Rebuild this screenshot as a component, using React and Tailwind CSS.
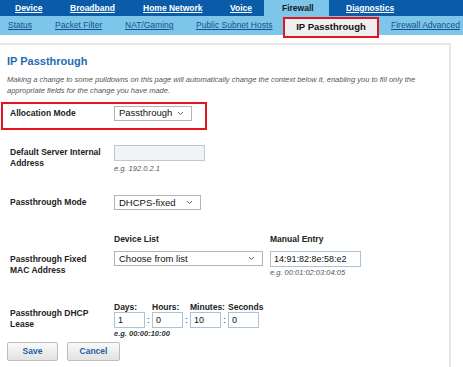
import React from 'react'

const font = { fontFamily: '"Liberation Sans", Arial, sans-serif' }

const Chevron = () => (
  <svg width="7" height="5" viewBox="0 0 7 5" className="shrink-0">
    <path d="M1 1 L3.5 3.5 L6 1" fill="none" stroke="#666" strokeWidth="1" />
  </svg>
)

const FakeSelect = ({ value, width }) => (
  <div
    className={`${width} h-[15px] flex items-center justify-between border border-[#b4b4b4] bg-white pl-[4px] pr-[7px] text-[9.5px] text-[#111]`}
  >
    <span className="leading-none">{value}</span>
    <Chevron />
  </div>
)

const Label = ({ children, className = '' }) => (
  <div className={`w-[104px] shrink-0 text-[8.5px] leading-[11px] font-bold text-[#222] ${className}`}>{children}</div>
)

const Hint = ({ children, className = '' }) => (
  <div className={`text-[7.5px] leading-[9px] italic text-[#555] ${className}`}>{children}</div>
)

const TimeBox = ({ value }) => (
  <div className="w-[31px] h-[16px] border border-[#a9c3d8] bg-white pl-[3px] text-[9px] leading-[14px] text-[#111]">
    {value}
  </div>
)

const Colon = () => <div className="w-[7px] text-center text-[9px] leading-[16px] text-[#222]">:</div>

export default function App() {
  const topNav = [
    { name: 'Device', w: 'w-[55px]' },
    { name: 'Broadband', w: 'w-[73px]' },
    { name: 'Home Network', w: 'w-[87px]' },
    { name: 'Voice', w: 'w-[34px]' }
  ]
  const subNav = [
    { name: 'Status', w: 'w-[47px]' },
    { name: 'Packet Filter', w: 'w-[70px]' },
    { name: 'NAT/Gaming', w: 'w-[71px]' },
    { name: 'Public Subnet Hosts', w: 'w-[87px]' }
  ]

  return (
    <div className="w-[463px] h-[367px] bg-white overflow-hidden" style={font}>
      {/* top navigation */}
      <div className="flex h-[16px] bg-[#0b5ca8] pl-[15px] whitespace-nowrap">
        {topNav.map((item) => (
          <div key={item.name} className={`${item.w} flex items-center`}>
            <span className="text-[8.5px] font-bold text-white underline">{item.name}</span>
          </div>
        ))}
        <div className="w-[65px] flex items-center pl-[18px] bg-[#7cc6e9]">
          <span className="text-[8.5px] font-bold text-[#1a1a1a]">Firewall</span>
        </div>
        <div className="ml-[17px] flex items-center">
          <span className="text-[8.5px] font-bold text-white underline">Diagnostics</span>
        </div>
      </div>

      {/* sub navigation */}
      <div className="flex items-start h-[19px] bg-[#7cc6e9] pl-[8px] whitespace-nowrap">
        {subNav.map((item) => (
          <div key={item.name} className={`${item.w} h-full flex items-center`}>
            <span className="text-[8.5px] text-[#17508c] underline">{item.name}</span>
          </div>
        ))}
        <div className="relative z-10 mt-[1px] w-[96px] h-[21px] flex items-center justify-center border-2 border-[#e3141e] bg-[#efefef]">
          <span className="text-[9.5px] font-bold text-[#111]">IP Passthrough</span>
        </div>
        <div className="ml-[12px] h-full flex items-center">
          <span className="text-[8.5px] text-[#17508c] underline">Firewall Advanced</span>
        </div>
      </div>

      {/* content panel */}
      <div className="mt-[8px] w-[451px] h-[330px] border-t-2 border-r-2 border-[#e6e6e6]">
        <h1 className="mt-[9px] pl-[7px] text-[11px] leading-[14px] font-bold text-[#1f6db3]">IP Passthrough</h1>
        <p className="mt-[6px] pl-[7px] text-[7.5px] leading-[11px] italic text-[#555] whitespace-nowrap">
          Making a change to some pulldowns on this page will automatically change the context below it, enabling you to fill only the
          <br />
          appropriate fields for the change you have made.
        </p>

        {/* allocation mode */}
        <div className="mt-[6px] ml-[1px] w-[206px] h-[28px] border-2 border-[#e3141e] pl-[7px] pb-[6px] flex items-center">
          <Label>Allocation Mode</Label>
          <FakeSelect value="Passthrough" width="w-[78px]" />
        </div>

        {/* default server */}
        <div className="mt-[15px] pl-[10px] flex items-start">
          <Label className="pt-[2px]">
            Default Server Internal
            <br />
            Address
          </Label>
          <div>
            <div className="w-[91px] h-[16px] border border-[#bcc8d2] bg-[#f1f3f5]" />
            <Hint className="mt-[3px]">e.g. 192.0.2.1</Hint>
          </div>
        </div>

        {/* passthrough mode */}
        <div className="mt-[22px] pl-[10px] flex items-center">
          <Label>Passthrough Mode</Label>
          <FakeSelect value="DHCPS-fixed" width="w-[87px]" />
        </div>

        {/* device list / manual entry */}
        <div className="mt-[24px] pl-[10px] flex text-[8.5px] leading-[11px] font-bold text-[#222]">
          <div className="w-[104px]" />
          <div className="w-[156px]">Device List</div>
          <div>Manual Entry</div>
        </div>
        <div className="mt-[6px] pl-[10px] flex items-start">
          <Label className="pt-[3px]">
            Passthrough Fixed
            <br />
            MAC Address
          </Label>
          <FakeSelect value="Choose from list" width="w-[149px]" />
          <div className="ml-[7px]">
            <div className="w-[91px] h-[16px] border border-[#a9c3d8] bg-white pl-[3px] text-[9px] leading-[14px] text-[#111]">
              14:91:82:8e:58:e2
            </div>
            <Hint className="mt-[1px]">e.g. 00:01:02:03:04:05</Hint>
          </div>
        </div>

        {/* dhcp lease */}
        <div className="mt-[25px] pl-[10px] flex items-start">
          <Label className="pt-[6px]">
            Passthrough DHCP
            <br />
            Lease
          </Label>
          <div>
            <div className="flex h-[10px] text-[8.5px] leading-[10px] font-bold text-[#222]">
              <div className="w-[38px]">Days:</div>
              <div className="w-[38px]">Hours:</div>
              <div className="w-[38px]">Minutes:</div>
              <div className="w-[38px]">Seconds</div>
            </div>
            <div className="flex">
              <TimeBox value="1" />
              <Colon />
              <TimeBox value="0" />
              <Colon />
              <TimeBox value="10" />
              <Colon />
              <TimeBox value="0" />
            </div>
            <div className="mt-[1px] text-[7.5px] leading-[9px] italic font-bold text-[#333]">e.g. 00:00:10:00</div>
          </div>
        </div>

        {/* buttons */}
        <div className="mt-[4px] pl-[7px] flex gap-[9px]">
          <button className="w-[51px] h-[19px] rounded-[2px] border border-[#bdbdbd] bg-gradient-to-b from-[#fafafa] to-[#e2e2e2] text-[8.5px] font-bold text-[#1f5fa3]">
            Save
          </button>
          <button className="w-[53px] h-[19px] rounded-[2px] border border-[#bdbdbd] bg-gradient-to-b from-[#fafafa] to-[#e2e2e2] text-[8.5px] font-bold text-[#1f5fa3]">
            Cancel
          </button>
        </div>
      </div>
    </div>
  )
}
